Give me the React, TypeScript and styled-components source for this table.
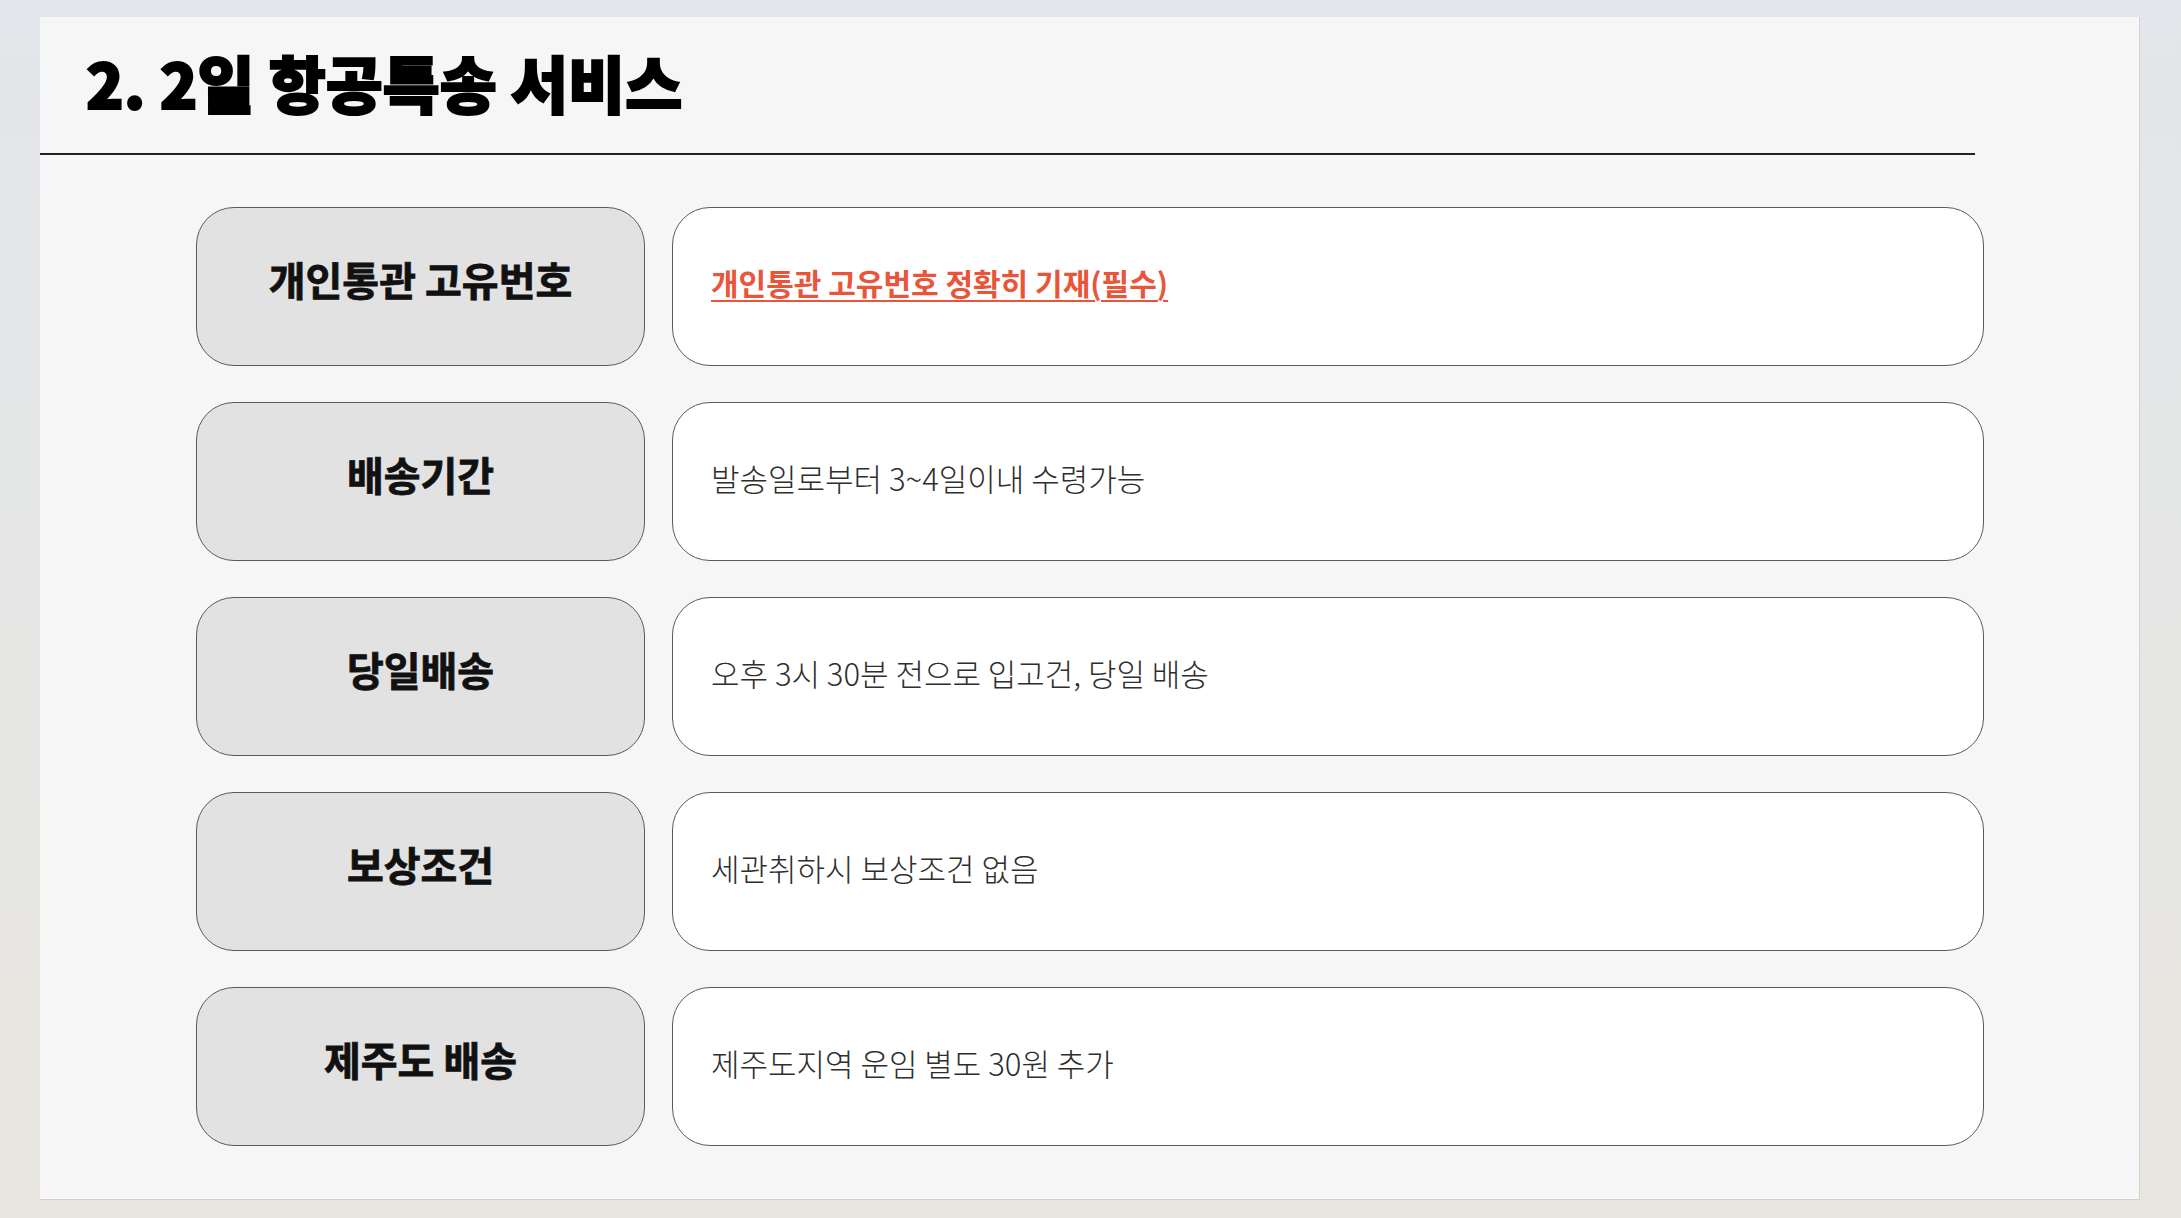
import React from "react";
import styled, { createGlobalStyle } from "styled-components";

const Global = createGlobalStyle`
  html, body { margin: 0; padding: 0; }
  body {
    font-family: "Noto Sans CJK KR", "Noto Sans", sans-serif;
    background: linear-gradient(180deg, #e3e6ea 0%, #e6e6e4 60%, #e8e6df 100%);
  }
`;

const Page = styled.div`
  box-sizing: border-box;
  width: 2181px;
  height: 1218px;
  padding: 17px 41px 18px 40px;
`;

const Panel = styled.section`
  box-sizing: border-box;
  height: 100%;
  background: #f6f6f7;
  border-right: 1px solid #d2d4d7;
  border-bottom: 1px solid #cfcfcc;
  display: flex;
  flex-direction: column;
`;

const Header = styled.header`
  box-sizing: border-box;
  width: 1935px;
  height: 138px;
  border-bottom: 2px solid #222;
  display: flex;
  align-items: center;
  padding: 0 0 6px 46px;
`;

const Title = styled.h1`
  margin: 0;
  font-family: "Noto Sans CJK KR", sans-serif;
  font-weight: 900;
  font-size: 62px;
  color: #000;
  line-height: 1;
  -webkit-text-stroke: 2px #000;
`;

const Rows = styled.div`
  display: grid;
  grid-template-columns: 449px 1312px;
  grid-auto-rows: 159px;
  column-gap: 27px;
  row-gap: 36px;
  margin: 52px 0 0 156px;
`;

const Card = styled.div<{ $label?: boolean }>`
  box-sizing: border-box;
  border: 1.5px solid #5a5a5a;
  border-radius: 38px;
  background: ${(p) => (p.$label ? "#e2e2e2" : "#ffffff")};
  display: flex;
  align-items: center;
  justify-content: ${(p) => (p.$label ? "center" : "flex-start")};
  padding: ${(p) => (p.$label ? "0 0 15px" : "0 0 9px 38px")};
`;

const Label = styled.span`
  font-family: "Noto Sans CJK KR", sans-serif;
  font-weight: 700;
  font-size: 40px;
  color: #111;
  -webkit-text-stroke: 0.8px #111;
`;

const Value = styled.span<{ $accent?: boolean }>`
  font-family: "Noto Sans CJK KR", sans-serif;
  font-size: ${(p) => (p.$accent ? "30px" : "31px")};
  font-weight: ${(p) => (p.$accent ? 700 : 300)};
  color: ${(p) => (p.$accent ? "#e8553a" : "#2e2e2e")};
  text-decoration: ${(p) => (p.$accent ? "underline" : "none")};
  text-decoration-thickness: 2px;
  text-underline-offset: 5px;
`;

const rows: { label: string; value: string; accent?: boolean }[] = [
  { label: "개인통관 고유번호", value: "개인통관 고유번호 정확히 기재(필수)", accent: true },
  { label: "배송기간", value: "발송일로부터 3~4일이내 수령가능" },
  { label: "당일배송", value: "오후 3시 30분 전으로 입고건, 당일 배송" },
  { label: "보상조건", value: "세관취하시 보상조건 없음" },
  { label: "제주도 배송", value: "제주도지역 운임 별도 30원 추가" },
];

export default function App() {
  return (
    <>
      <Global />
      <Page>
        <Panel>
          <Header>
            <Title>2. 2일 항공특송 서비스</Title>
          </Header>
          <Rows>
            {rows.map((r) => (
              <React.Fragment key={r.label}>
                <Card $label>
                  <Label>{r.label}</Label>
                </Card>
                <Card>
                  <Value $accent={r.accent}>{r.value}</Value>
                </Card>
              </React.Fragment>
            ))}
          </Rows>
        </Panel>
      </Page>
    </>
  );
}
